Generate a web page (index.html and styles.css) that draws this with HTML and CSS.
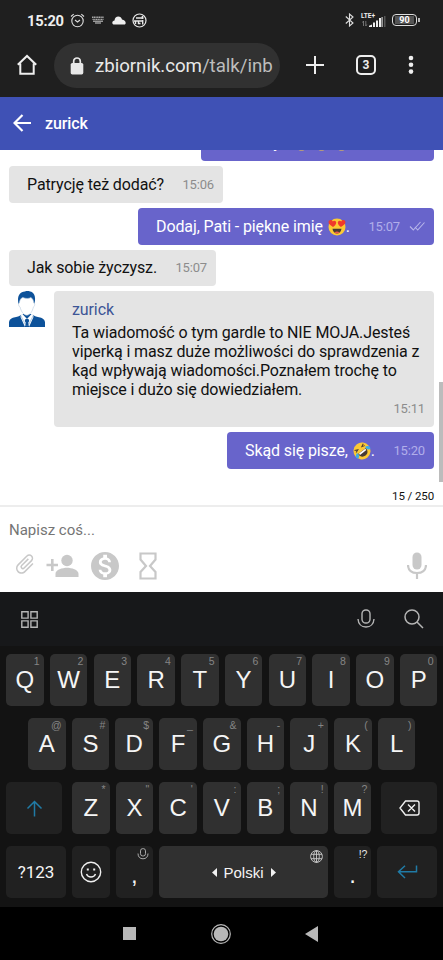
FILE: index.html
```html
<!DOCTYPE html>
<html lang="pl">
<head>
<meta charset="utf-8">
<title>zurick</title>
<link rel="stylesheet" href="styles.css">
</head>
<body>
<div class="phone">
  <div class="status">
    <span class="clock">15:20</span>
    <svg class="alarm" width="15" height="15" viewBox="0 0 15 15" fill="none" stroke="#dedede" stroke-width="1.1"><circle cx="7.5" cy="8" r="5.7"/><path d="M1 3.5 3.7 1.2M14 3.5 11.3 1.2M5 7l2.5 2L10 7"/></svg>
    <svg class="keys" width="12" height="8" viewBox="0 0 12 8" fill="none" stroke="#aaa" stroke-width="1.4"><path d="M0 1.2h12M0.5 3.4h11" stroke-dasharray="1.3 .4"/><path d="M1 5.3h10M3 7h6" stroke="#999"/></svg>
    <svg class="cloud" width="14" height="9" viewBox="0 0 14 9" fill="#eee"><path d="M2.6 8.6C.8 8.6.2 7.500.3 6.500.4 5.300 1.300 4.600 2.500 4.400 2.700 1.900 4.300.6 6.300.6c1.900 0 3.200 1.200 3.700 2.900 2.200.2 3.700 1.800 3.700 3.600 0 .9-.5 1.500-1.400 1.500z"/></svg>
    <svg class="badge" width="15" height="15" viewBox="0 0 15 15" fill="none" stroke="#e8e8e8"><circle cx="7.500" cy="7.500" r="6.500" stroke-width="1.200"/><path d="M4 5h7.500M10.500 3v3" stroke-width="1.700"/><path d="M2 8h9M3.500 8v3M6.500 8v2.500h2M10.700 7v4.500" stroke-width="1.400"/></svg>
    <span class="spring"></span>
    <svg class="bt" width="9" height="14" viewBox="0 0 9 14" fill="none" stroke="#ddd" stroke-width="1.100"><path d="M.8 3.500 8 10 4.500 13V1L8 4 .8 10.500"/></svg>
    <div class="signal">
      <span class="lte">LTE+</span>
      <svg class="levels" width="25" height="11" viewBox="0 0 25 11"><path d="M2.500 5v5M1.500 6.500l1-1.500M4.800 5v5M5.800 8.500 4.800 10" stroke="#888" stroke-width=".8" fill="none"/><path d="M8 11V9.800L11 8.500V11zM12 6.500h2V11h-2zM15 4.500h2V11h-2zM18 2h2v9h-2z" fill="#eee"/><path d="M20.500 1h1.200v10h-1.200z" fill="#ccc"/><path d="M23 0h1.500v11H23z" fill="#555"/></svg>
    </div>
    <div class="battery"><span>90</span></div>
  </div>
  <div class="toolbar">
    <svg class="home" width="22" height="22" viewBox="0 0 22 22" fill="none" stroke="#eee" stroke-width="2"><path d="M1.800 10.800 11 2l9.200 8.800M4.300 9.500v10.300h13.400V9.500"/></svg>
    <div class="url">
      <svg width="14" height="18" viewBox="0 0 14 18"><rect x=".7" y="6" width="12.600" height="11.400" rx="1.600" fill="#e8e8e8"/><path d="M3.700 6V4.300a3.300 3.300 0 0 1 6.600 0V6" fill="none" stroke="#e8e8e8" stroke-width="1.700"/></svg>
      <div class="address">zbiornik.com<span>/talk/inb</span></div>
    </div>
    <svg class="plus" width="18" height="18" viewBox="0 0 18 18" stroke="#eee" stroke-width="2"><path d="M9 0v18M0 9h18"/></svg>
    <div class="tabs">3</div>
    <svg class="dots" width="6" height="20" viewBox="0 0 6 20" fill="#eee"><circle cx="3" cy="3" r="2.300"/><circle cx="3" cy="9.800" r="2.300"/><circle cx="3" cy="16.600" r="2.300"/></svg>
  </div>
  <header class="head">
    <svg width="19" height="18" viewBox="0 0 19 18" fill="none" stroke="#fff" stroke-width="2.200"><path d="M18 9H2M9.500 1 1.500 9l8 8"/></svg>
    <span>zurick</span>
  </header>
  <main class="chat">
    <div class="msg out first"><span>Świetny</span><svg class="face" viewBox="0 0 18 18"><circle cx="9" cy="9" r="8.500" fill="#fcc934"/></svg><svg class="face" viewBox="0 0 18 18"><circle cx="9" cy="9" r="8.500" fill="#fcc934"/></svg><svg class="face" viewBox="0 0 18 18"><circle cx="9" cy="9" r="8.500" fill="#fcc934"/></svg></div>
    <div class="msg in w-ask"><span class="text">Patrycję też dodać?</span><time>15:06</time></div>
    <div class="msg out w-add"><span class="text">Dodaj, Pati - piękne imię <svg class="emoji" viewBox="0 0 18 18"><circle cx="9" cy="9" r="8.500" fill="#fcc934"/><path d="M5 9C2 7 0 5.500.6 3.500 1.300 1.500 3.900 1.500 4.800 3.400 6 2 8.300 2.800 8.200 4.800 8.100 6.700 6.500 8 5 9zM13 9c3-2 5-3.500 4.400-5.500-.7-2-3.300-2-4.200-.1C12 2 9.700 2.800 9.800 4.800 9.900 6.700 11.500 8 13 9z" fill="#f0392b"/><path d="M4.500 10.800h9c-.4 3-2.200 4.700-4.500 4.700s-4.100-1.700-4.500-4.700z" fill="#493b32"/><path d="M6.500 14.500c1.500-1.300 3.500-1.300 5 0-1.500 1.300-3.500 1.300-5 0z" fill="#ee584d"/></svg>.</span><time>15:07</time><svg class="ticks" width="16" height="10" viewBox="0 0 16 10" fill="none" stroke="#b8b6ea" stroke-width="1.100"><path d="M1 5.500 4.300 9 11.500 1M6 6l2.700 3L15.500 1.500"/></svg></div>
    <div class="msg in w-wish"><span class="text">Jak sobie życzysz.</span><time>15:07</time></div>
    <div class="long-row">
      <svg class="avatar" width="36" height="36" viewBox="0 0 36 36"><path d="M0 36V31c.5-3 3-4 6-4.700 3-.5 5-1.500 7-3.300h10c2 1.800 4 2.800 7 3.300 3 .7 5.500 1.700 6 4.700v5z" fill="#0d529a"/><path d="M12.500 22 18 28l5.500-6 1 4L20 36h-4l-4.500-10z" fill="#fff"/><path d="m16.500 28h3l.8 2-1 1.500.9 4.500h-4.400l.9-4.500-1-1.500z" fill="#0d529a"/><path d="m11.500 24 5.500 11M24.500 24 19 35" stroke="#8fb2d4" stroke-width=".7"/><path d="M9.500 13C8 6 10 1 16 .5 19-.8 26 .5 26 7c.2 2.500-.3 4.500-.8 6z" fill="#0d529a"/><path d="M10.300 12c.5-3 1.500-5 3.500-5.500 3 1.300 6 1.300 8 0 2 1 2.700 3 3 5.500 1.500 0 1 3.500-.5 4.200-.8 4.300-3.500 8-6.500 8s-5.800-3.700-6.600-8c-1.700-.7-2.200-4.200-.9-4.200z" fill="#fff" stroke="#b8cbdd" stroke-width=".6"/></svg>
      <div class="long">
        <div class="name">zurick</div>
        <p>Ta wiadomość o tym gardle to NIE MOJA.Jesteś<br>viperką i masz duże możliwości do sprawdzenia z<br>kąd wpływają wiadomości.Poznałem trochę to<br>miejsce i dużo się dowiedziałem.</p>
        <time>15:11</time>
      </div>
    </div>
    <div class="msg out w-who"><span class="text">Skąd się pisze, <svg class="emoji" viewBox="0 0 18 18"><g transform="rotate(-38 9 9)"><circle cx="9" cy="9" r="8.500" fill="#fcc934"/><path d="M4 9h10c0 3.800-2 5.700-5 5.700S4 12.800 4 9z" fill="#493b32"/><path d="M5 9.200h8v1.700H5z" fill="#fff"/><path d="m3.500 4 3 1.500-3 1M14.500 4l-3 1.500 3 1" fill="none" stroke="#493b32"/><path d="M.5 12C0 9.500 1.500 8 4 7.500c.5 3-.5 5.500-3.500 4.500zM17.500 12c.5-2.500-1-4-3.500-4.500-.5 3 .5 5.500 3.500 4.500z" fill="#3baee8"/></g></svg>.</span><time>15:20</time></div>
    <div class="count">15 / 250</div>
    <i class="scroll"></i>
  </main>
  <section class="compose">
    <div class="hint">Napisz coś...</div>
    <div class="tools">
      <svg class="clip" width="24" height="24" viewBox="0 0 24 24" fill="#c8c8c8"><path transform="rotate(45 12 12)" d="M16.500 6v11.500c0 2.210-1.790 4-4 4s-4-1.790-4-4V5a2.500 2.500 0 0 1 5 0v10.500c0 .55-.45 1-1 1s-1-.45-1-1V6H10v9.500a2.500 2.500 0 0 0 5 0V5c0-2.210-1.790-4-4-4S7 2.790 7 5v12.500c0 3.040 2.460 5.500 5.500 5.500s5.500-2.460 5.500-5.500V6z"/></svg>
      <svg class="person" width="33" height="24" viewBox="0 0 33 24" fill="#c8c8c8"><circle cx="21" cy="6.500" r="5.700"/><path d="M9.500 23v-3.200c0-4 7-6 11.500-6s11.500 2 11.500 6V23zM5 5h2.600v4.700H12v2.600H7.600V17H5v-4.700H.5V9.700H5z"/></svg>
      <svg class="coin" width="28" height="28" viewBox="2 2 20 20" fill="#c8c8c8"><path d="M12 2C6.480 2 2 6.480 2 12s4.480 10 10 10 10-4.480 10-10S17.520 2 12 2zm1.410 16.090V20h-2.670v-1.930c-1.710-.36-3.160-1.460-3.270-3.400h1.960c.1 1.050.82 1.870 2.650 1.870 1.960 0 2.400-.98 2.400-1.590 0-.83-.44-1.610-2.670-2.140-2.480-.6-4.180-1.620-4.180-3.670 0-1.720 1.390-2.840 3.110-3.210V4h2.670v1.950c1.860.45 2.790 1.860 2.850 3.390H14.300c-.05-1.110-.64-1.870-2.220-1.870-1.500 0-2.400.68-2.400 1.640 0 .84.65 1.390 2.670 1.910s4.180 1.390 4.180 3.910c-.01 1.830-1.380 2.830-3.120 3.160z"/></svg>
      <svg class="glass" width="18" height="28" viewBox="0 0 18 28" fill="none" stroke="#c8c8c8" stroke-width="2.200"><path d="M1.500 1.500h15v6L11 14l5.500 6v6.500h-15V20L7 14 1.500 7.500z"/></svg>
      <span class="spring"></span>
      <svg class="mic" width="20" height="28" viewBox="0 0 20 28"><rect x="5.500" y=".5" width="9" height="17" rx="4.500" fill="#c8c8c8"/><path d="M1 13c0 5.500 4 8 9 8s9-2.500 9-8M10 21v6" fill="none" stroke="#c8c8c8" stroke-width="2.200"/></svg>
    </div>
  </section>
  <section class="keyboard">
    <div class="strip">
      <svg width="17" height="17" viewBox="0 0 17 17" fill="none" stroke="#b5b5b5" stroke-width="1.400"><path d="M.8.800h6.300v6.300H.8zM9.900.800h6.300v6.300H9.900zM.8 9.900h6.300v6.300H.8zM9.900 9.900h6.300v6.300H9.900z"/></svg>
      <span class="spring"></span>
      <svg class="strip-mic" width="18" height="20" viewBox="0 0 18 20" fill="none" stroke="#b5b5b5" stroke-width="1.400"><rect x="5" y="1" width="8" height="13" rx="3.800"/><path d="M1 10c.3 5 3.500 8 8 8s7.700-3 8-8"/></svg>
      <svg width="20" height="20" viewBox="0 0 20 20" fill="none" stroke="#b5b5b5" stroke-width="1.500"><circle cx="8" cy="8" r="7"/><path d="m13 13 6 6"/></svg>
    </div>
    <div class="row"><b class="key"><sup>1</sup>Q</b><b class="key"><sup>2</sup>W</b><b class="key"><sup>3</sup>E</b><b class="key"><sup>4</sup>R</b><b class="key"><sup>5</sup>T</b><b class="key"><sup>6</sup>Y</b><b class="key"><sup>7</sup>U</b><b class="key"><sup>8</sup>I</b><b class="key"><sup>9</sup>O</b><b class="key"><sup>0</sup>P</b></div>
    <div class="row middle"><b class="key"><sup>@</sup>A</b><b class="key"><sup>#</sup>S</b><b class="key"><sup>$</sup>D</b><b class="key"><sup>_</sup>F</b><b class="key"><sup>&amp;</sup>G</b><b class="key"><sup>-</sup>H</b><b class="key"><sup>+</sup>J</b><b class="key"><sup>(</sup>K</b><b class="key"><sup>)</sup>L</b></div>
    <div class="row"><b class="key dark shift"><svg width="17" height="17" viewBox="0 0 17 17" fill="none" stroke="#207ba6" stroke-width="1.500"><path d="M8.500 16.500V1.500M1.500 8.500l7-7 7 7"/></svg></b><b class="key"><sup>*</sup>Z</b><b class="key"><sup>"</sup>X</b><b class="key"><sup>'</sup>C</b><b class="key"><sup>:</sup>V</b><b class="key"><sup>;</sup>B</b><b class="key"><sup>!</sup>N</b><b class="key"><sup>?</sup>M</b><b class="key dark erase"><svg width="21" height="16" viewBox="0 0 21 16" fill="none" stroke="#f2f2f2" stroke-width="1.400"><path d="M6.500 1H18q2 0 2 2v10q0 2-2 2H6.500L1 8zM9 4.500l7 7M16 4.500l-7 7"/></svg></b></div>
    <div class="row">
      <b class="key dark sym">?123</b>
      <b class="key dark"><svg width="22" height="22" viewBox="0 0 22 22" fill="none" stroke="#f0f0f0" stroke-width="1.400"><circle cx="11" cy="11" r="9.700"/><path d="M6.500 13c1.500 4 7.500 4 9 0"/><path d="M6.800 8.500h2M13.200 8.500h2" stroke-width="2"/></svg></b>
      <b class="key dark punct"><sup><svg width="12" height="12" viewBox="0 0 12 12" fill="none" stroke="#aaa"><rect x="3.500" y=".6" width="5" height="7.400" rx="2.300"/><path d="M1 5.500C1 9 3 10.800 6 10.800S11 9 11 5.500"/></svg></sup>,</b>
      <b class="key space"><sup><svg width="13" height="13" viewBox="0 0 13 13" fill="none" stroke="#ccc" stroke-width=".9"><circle cx="6.500" cy="6.500" r="5.900"/><ellipse cx="6.500" cy="6.500" rx="2.800" ry="5.900"/><path d="M6.500.6v11.800M1 4.300h11M1 8.700h11"/></svg></sup><svg width="5" height="9" viewBox="0 0 5 9" fill="#f2f2f2"><path d="M5 0v9L0 4.500z"/></svg><span>Polski</span><svg width="5" height="9" viewBox="0 0 5 9" fill="#f2f2f2"><path d="M0 0v9l5-4.500z"/></svg></b>
      <b class="key dark punct dot"><sup>!?</sup>.</b>
      <b class="key dark enter"><svg width="21" height="14" viewBox="0 0 21 14" fill="none" stroke="#207ba6" stroke-width="1.500"><path d="M19.500.5v6.200H2M8 .8 1.500 6.700 8 13"/></svg></b>
    </div>
  </section>
  <nav class="nav">
    <svg width="13" height="13"><rect width="13" height="13" fill="#b8b8b8"/></svg>
    <svg width="20" height="20" viewBox="0 0 20 20"><circle cx="10" cy="10" r="9.300" fill="none" stroke="#b8b8b8" stroke-width="1.200"/><circle cx="10" cy="10" r="7.300" fill="#b8b8b8"/></svg>
    <svg width="13" height="16" viewBox="0 0 13 16"><path d="M13 0v16L0 8z" fill="#b8b8b8"/></svg>
  </nav>
</div>
</body>
</html>
```
FILE: styles.css
```css
* { box-sizing: border-box; }
body { margin: 0; background: #000; font-family: Roboto, "Liberation Sans", sans-serif; }
svg { display: block; flex: none; }
.phone { width: 443px; height: 960px; overflow: hidden; display: flex; flex-direction: column; }
.phone > * { flex: none; }
.spring { flex: 1; }

.status { height: 40px; background: #1f1f1f; display: flex; align-items: center; padding: 0 26px 0 27px; color: #eee; }
.clock { font-size: 14.700px; font-weight: 700; width: 43px; letter-spacing: -.2px; padding-top: 1px; }
.keys { margin-left: 7px; }
.cloud { margin-left: 8px; }
.badge { margin-left: 6px; }
.bt { margin-right: 7px; }
.signal { width: 25px; height: 14px; margin-right: 6px; }
.lte { display: block; font-size: 6.500px; line-height: 6px; font-weight: 700; white-space: nowrap; }
.levels { margin-top: -3px; }
.battery { width: 25px; height: 12px; border: 1.500px solid #ddd; border-radius: 4px; padding: 1px 2px; position: relative; }
.battery span { display: block; background: #555; color: #fff; font-size: 9px; line-height: 8px; font-weight: 700; text-align: center; }
.battery::after { content: ""; position: absolute; right: -4px; top: 3px; width: 2px; height: 4px; background: #bbb; }

.toolbar { height: 57px; background: #1f1f1f; display: flex; align-items: center; padding: 0 29px 8px 16px; color: #eee; }
.home { margin-right: 16px; margin-top: 1px; }
.url { width: 226px; height: 45px; margin-top: 2px; border-radius: 23px; background: #313131; display: flex; align-items: center; padding: 0 6px 0 16px; }
.address { margin-left: 11px; font-size: 18.700px; letter-spacing: -.04px; line-height: 26px; white-space: nowrap; color: #e8e8e8; }
.address span { color: #bdbdbd; }
.plus { margin-left: 26px; }
.tabs { width: 20px; height: 20px; margin-left: 32px; border: 2px solid #eee; border-radius: 5px; font-size: 12px; line-height: 16px; font-weight: 700; text-align: center; }
.dots { margin-left: 32px; }

.head { height: 53px; background: #3f51b5; display: flex; align-items: center; gap: 13px; padding: 0 0 1px 13px; color: #fff; font-size: 16px; font-weight: 500; letter-spacing: -.1px; }

.chat { height: 355px; background: #fff; overflow: hidden; padding: 0 9px; display: flex; flex-direction: column; position: relative; font-size: 16px; line-height: 19px; letter-spacing: -.11px; color: #111; }
.msg { flex: none; height: 36.700px; margin-bottom: 5px; border-radius: 4px; padding: 0 9px 0 18px; display: flex; align-items: center; white-space: nowrap; }
.msg .text { flex: 1; }
.msg.in { background: #e4e4e4; align-self: flex-start; }
.msg.out { background: #6864cb; color: #fff; align-self: flex-end; }
time { font-size: 13px; color: #8c8c8c; letter-spacing: -.15px; }
.out time { color: #b1aeea; }
.msg.first { width: 233px; margin-top: -25.500px; padding: 0 9px 0 25px; }
.face { width: 17px; height: 17px; margin-left: 3px; }
.first span { width: 64px; }
.w-ask { width: 214px; }
.w-add { width: 296px; }
.w-wish { width: 207px; }
.w-who { width: 207px; }
.emoji { display: inline-block; width: 18px; height: 18px; vertical-align: -4px; margin-left: 1px; }
.ticks { margin-left: 9px; }
.long-row { flex: none; display: flex; justify-content: space-between; margin-bottom: 5px; }
.long { width: 380px; height: 136px; background: #e4e4e4; border-radius: 4px; padding: 9px 9px 0 18px; }
.name { color: #3d5596; }
.long p { margin: 4px 0 0; white-space: nowrap; }
.long time { display: block; text-align: right; }
.count { font-size: 11.500px; line-height: 14px; margin-top: 15px; text-align: right; }
.scroll { position: absolute; right: 0; top: 232px; width: 4px; height: 100px; background: #bcbcbc; }

.compose { height: 87px; background: #fff; border-top: 2px solid #ededed; padding: 14px 16px 0 9px; }
.hint { color: #757575; font-size: 15px; line-height: 18px; }
.tools { display: flex; align-items: center; height: 28px; margin-top: 13px; padding-left: 4px; }
.clip { margin-top: -4px; }
.person { margin-left: 9px; }
.coin { margin-left: 12px; }
.glass { margin-left: 20px; }

.keyboard { height: 315px; background: #131313; padding: 0 5.500px 0 6px; font-family: "Liberation Sans", Arial, sans-serif; }
.strip { height: 62px; margin: 0 -6px; padding: 0 20px 8px 21px; background: linear-gradient(#17181a 54px, #131313 54px); display: flex; align-items: center; }
.strip-mic { margin-right: 29px; }
.row { display: flex; justify-content: space-between; height: 52.300px; margin-bottom: 11.700px; }
.row.middle { padding: 0 22px; }
.key { position: relative; width: 37.600px; height: 100%; border-radius: 5px; background: #303030; color: #f5f5f5; display: flex; align-items: center; justify-content: center; font-size: 24px; font-weight: 400; }
.key sup { position: absolute; right: 4px; top: 1px; font-size: 10.500px; line-height: 13px; color: #858585; }
.key.dark { background: #212121; }
.key.shift { width: 56px; margin-right: 4px; }
.key.erase { width: 56px; margin-left: 4px; }
.key.sym { width: 60px; font-family: Roboto, sans-serif; font-size: 17px; }
.key.space { width: 168.500px; gap: 7px; font-size: 15px; }
.key.space sup { right: 5px; top: 4px; }
.punct { padding-top: 5px; }
.key.punct sup { top: 2px; }
.key.dot sup { color: #e5e5e5; }
.key.enter { width: 60px; }

.nav { height: 53px; background: #000; display: flex; align-items: center; justify-content: space-between; padding: 0 125px 0 123px; }
```
